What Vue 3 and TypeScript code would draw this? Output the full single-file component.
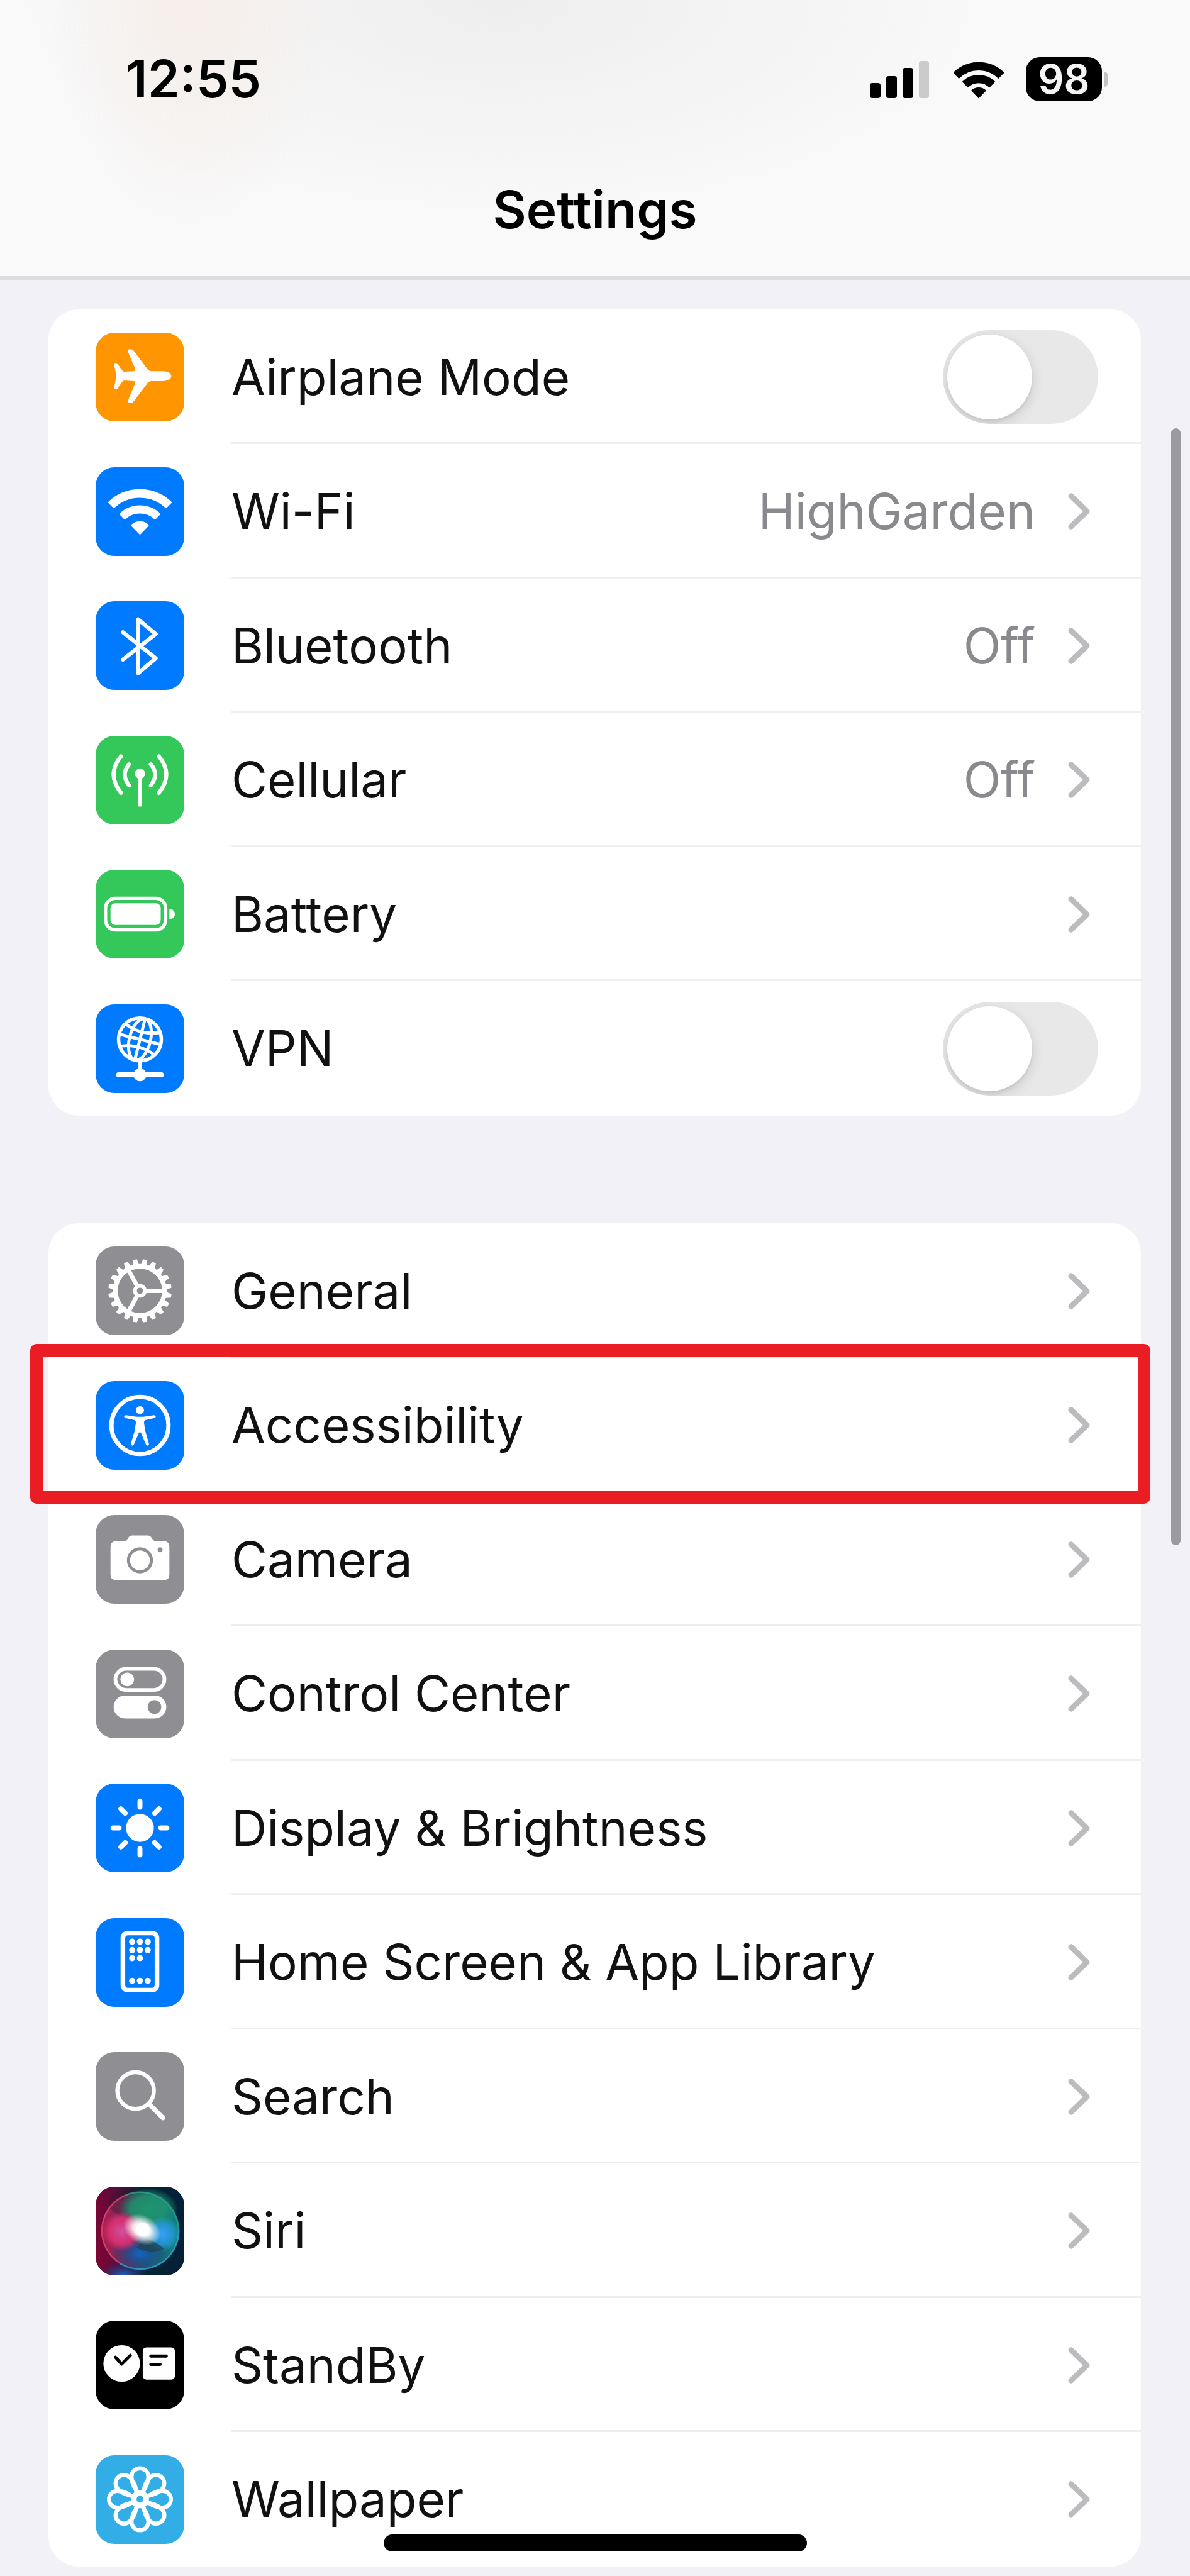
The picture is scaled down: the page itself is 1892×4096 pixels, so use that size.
<script setup lang="ts">
import { ref } from 'vue'

interface SettingRow {
  id: string
  label: string
  tint: string
  value?: string
  toggle?: boolean
  highlighted?: boolean
}

const blue = '#007aff'
const green = '#34c759'
const gray = '#8e8e93'

const groups: SettingRow[][] = [
  [
    { id: 'airplane', label: 'Airplane Mode', tint: '#ff9500', toggle: true },
    { id: 'wifi', label: 'Wi-Fi', tint: blue, value: 'HighGarden' },
    { id: 'bluetooth', label: 'Bluetooth', tint: blue, value: 'Off' },
    { id: 'cellular', label: 'Cellular', tint: green, value: 'Off' },
    { id: 'battery', label: 'Battery', tint: green },
    { id: 'vpn', label: 'VPN', tint: blue, toggle: true },
  ],
  [
    { id: 'general', label: 'General', tint: gray },
    { id: 'accessibility', label: 'Accessibility', tint: blue, highlighted: true },
    { id: 'camera', label: 'Camera', tint: gray },
    { id: 'control', label: 'Control Center', tint: gray },
    { id: 'display', label: 'Display & Brightness', tint: blue },
    { id: 'home', label: 'Home Screen & App Library', tint: blue },
    { id: 'search', label: 'Search', tint: gray },
    { id: 'siri', label: 'Siri', tint: '#10141c' },
    { id: 'standby', label: 'StandBy', tint: '#000000' },
    { id: 'wallpaper', label: 'Wallpaper', tint: '#32ade6' },
  ],
]

const enabled = ref<Record<string, boolean>>({ airplane: false, vpn: false })

const teeth = Array.from({ length: 20 }, (_, i) => i * 18 + 9)
const rays = Array.from({ length: 8 }, (_, i) => i * 45)
const appDots = [
  [59, 38], [71.5, 38], [84, 38],
  [59, 51.5], [71.5, 51.5], [84, 51.5],
  [59, 64.5], [71.5, 64.5],
  [59, 101], [71.5, 101], [84, 101],
]
</script>

<template>
  <div class="phone">
    <header class="header">
      <div class="status">
        <time class="clock">12:55</time>
        <div class="indicators">
          <svg class="signal" viewBox="0 0 94 60" aria-hidden="true">
            <rect x="0" y="36" width="17" height="24" rx="4" />
            <rect x="26" y="25" width="17" height="35" rx="4" />
            <rect x="52" y="12" width="17" height="48" rx="4" />
            <rect x="78" y="1" width="16" height="59" rx="4" fill="#cbcbcb" />
          </svg>
          <svg class="wifi" viewBox="20 33 103 77" aria-hidden="true">
            <g fill="none" stroke="#000" stroke-width="17">
              <path d="M25 63.500A66 66 0 0 1 118 63.500" />
              <path d="M43.500 82A39.500 39.500 0 0 1 99.500 82" />
            </g>
            <path d="M71.500 110L56 94A22 22 0 0 1 87 94Z" />
          </svg>
          <div class="power">
            <span class="level">98</span>
            <span class="nub"></span>
          </div>
        </div>
      </div>
      <h1 class="title">Settings</h1>
    </header>

    <main class="content">
      <ul v-for="(group, g) in groups" :key="g" class="group">
        <li
          v-for="row in group"
          :key="row.id"
          class="item"
          :class="{ highlighted: row.highlighted }"
        >
          <component
            :is="row.toggle ? 'label' : 'a'"
            class="row"
            :href="row.toggle ? undefined : '#' + row.id"
            :for="row.toggle ? 'switch-' + row.id : undefined"
          >
            <svg
              class="icon"
              viewBox="0 0 143 143"
              :style="{ backgroundColor: row.tint }"
              fill="none"
              stroke-linecap="round"
              stroke-linejoin="round"
              aria-hidden="true"
            >
              <path
                v-if="row.id === 'airplane'"
                fill="#fff"
                d="M122 70C122 75 116 78 108 78H89Q86 78 84 81L62 110Q60 113 57 113H54Q51 113 52 110L64 81Q65 78 62 78L47 77Q44 77 43 79L36 89Q35 91 33 91H31Q29.500 91 30 88L33.500 70L30 52Q29.500 49 31 49H33Q35 49 36 51L43 61Q44 63 47 63L62 62Q65 62 64 59L52 30Q51 27 54 27H57Q60 27 62 30L84 59Q86 62 89 62H108C116 62 122 65 122 70Z"
              />
              <g v-else-if="row.id === 'wifi'">
                <g stroke="#fff" stroke-linecap="butt">
                  <path stroke-width="14" d="M24.500 61.500A67 67 0 0 1 118.500 61.500" />
                  <path stroke-width="13" d="M42.500 80A41 41 0 0 1 100.500 80" />
                </g>
                <path fill="#fff" d="M71.500 109L57.500 94.500Q57 93 58 92A21 21 0 0 1 85 92Q86 93 85.500 94.500Z" />
              </g>
              <path
                v-else-if="row.id === 'bluetooth'"
                stroke="#fff"
                stroke-width="6.500"
                d="M44 50L97 92L68.500 116V29L97 53L44 94"
              />
              <g v-else-if="row.id === 'cellular'" stroke="#fff" stroke-width="6.500">
                <path d="M41 33Q17 62 41 92M102 33Q126 62 102 92" />
                <path d="M54 46Q40 62 54 80M89 46Q103 62 89 80M71.500 64V111" />
                <circle cx="71.500" cy="61" r="5" fill="#fff" />
              </g>
              <g v-else-if="row.id === 'battery'">
                <rect x="16" y="46" width="97" height="51" rx="16" stroke="#fff" stroke-width="5.500" />
                <rect x="24" y="54" width="81" height="35" rx="8" fill="#fff" />
                <path fill="#fff" d="M119 63Q128 65 128 71.500Q128 78 119 80Z" />
              </g>
              <g v-else-if="row.id === 'vpn'" stroke="#fff" stroke-width="5">
                <circle cx="71.500" cy="56.500" r="34.500" stroke-width="5.500" />
                <g transform="rotate(14 71.500 56.500)">
                  <ellipse cx="71.500" cy="56.500" rx="17" ry="34" />
                  <path d="M71.500 22V91M38 56.500H105M43 38Q71.500 50 100 38M43 75Q71.500 63 100 75" />
                </g>
                <path stroke-width="7" d="M71.500 92V112" />
                <path stroke-width="8" d="M37 113.500H106" />
                <circle cx="71.500" cy="113.500" r="8" fill="#fff" />
              </g>
              <g v-else-if="row.id === 'general'" stroke="#fff">
                <circle cx="71.500" cy="71.500" r="39.500" stroke-width="7.500" />
                <path
                  v-for="a in teeth"
                  :key="a"
                  fill="#fff"
                  stroke="none"
                  d="M66 31L68.500 20.500H74.500L77 31Z"
                  :transform="`rotate(${a} 71.500 71.500)`"
                />
                <circle cx="71.500" cy="71.500" r="8" stroke-width="6" />
                <path stroke-width="7" d="M81 71.500H110M67 63.500L53 38M67 79.500L53 105" />
              </g>
              <g v-else-if="row.id === 'accessibility'">
                <circle cx="71.500" cy="71.500" r="46" stroke="#fff" stroke-width="7" />
                <circle cx="71.500" cy="47" r="6.500" fill="#fff" />
                <path
                  fill="#fff"
                  d="M49 55L66 57.500H77L94 55Q97 55 97 57Q97 59 95 59.500L80 63Q78 64 78 67L80 80L86 101Q86 104 84 104Q82 104.500 81 102L73 83H70L62 102Q61 104.500 59 104Q57 104 57 101L63 80L65 67Q65 64 63 63L48 59.500Q46 59 46 57Q46 55 49 55Z"
                />
              </g>
              <g v-else-if="row.id === 'camera'">
                <path
                  fill="#fff"
                  d="M34 42H46Q49 42 51 39L54 35Q56 33 59 33H84Q87 33 89 35L92 39Q94 42 97 42H109Q119 42 119 51V96Q119 105 109 105H34Q24 105 24 96V51Q24 42 34 42Z"
                />
                <circle cx="71.500" cy="73" r="18.500" stroke="#8e8e93" stroke-width="5" />
                <circle cx="104" cy="56" r="4" fill="#8e8e93" />
              </g>
              <g v-else-if="row.id === 'control'">
                <rect x="32" y="31" width="79" height="34" rx="17" stroke="#fff" stroke-width="6" />
                <circle cx="51" cy="48" r="11" fill="#fff" />
                <rect x="29" y="74" width="85" height="37" rx="18.500" fill="#fff" />
                <circle cx="95" cy="92.500" r="11" fill="#8e8e93" />
              </g>
              <g v-else-if="row.id === 'display'">
                <circle cx="71.500" cy="71.500" r="22.500" fill="#fff" />
                <path
                  v-for="a in rays"
                  :key="a"
                  stroke="#fff"
                  stroke-width="8"
                  d="M105 71.500H115"
                  :transform="`rotate(${a} 71.500 71.500)`"
                />
              </g>
              <g v-else-if="row.id === 'home'">
                <rect x="44" y="24" width="55" height="92" rx="8" stroke="#fff" stroke-width="7.500" />
                <circle v-for="(d, i) in appDots" :key="i" :cx="d[0]" :cy="d[1]" r="5" fill="#fff" />
              </g>
              <g v-else-if="row.id === 'search'" stroke="#fff">
                <circle cx="64.500" cy="62" r="29.500" stroke-width="6.500" />
                <path stroke-width="7.500" d="M86 83.500L108.500 106" />
              </g>
              <g v-else-if="row.id === 'siri'">
                <defs>
                  <linearGradient id="siri-edge" x1="0" y1="0.550" x2="1" y2="0.450">
                    <stop offset="0" stop-color="#7d0535" />
                    <stop offset="0.250" stop-color="#5c0b3a" />
                    <stop offset="0.550" stop-color="#062430" />
                    <stop offset="1" stop-color="#04203a" />
                  </linearGradient>
                  <linearGradient id="siri-orb" x1="0" y1="0" x2="1" y2="0">
                    <stop offset="0" stop-color="#c21f55" />
                    <stop offset="0.350" stop-color="#6c3a66" />
                    <stop offset="0.600" stop-color="#2d6f7c" />
                    <stop offset="1" stop-color="#109a98" />
                  </linearGradient>
                  <radialGradient id="siri-green">
                    <stop offset="0" stop-color="#1f9470" />
                    <stop offset="0.600" stop-color="#1f9470" stop-opacity="0.850" />
                    <stop offset="1" stop-color="#1f9470" stop-opacity="0" />
                  </radialGradient>
                  <radialGradient id="siri-pink">
                    <stop offset="0" stop-color="#d250a0" />
                    <stop offset="0.650" stop-color="#dc2f70" stop-opacity="0.900" />
                    <stop offset="1" stop-color="#dc2f70" stop-opacity="0" />
                  </radialGradient>
                  <radialGradient id="siri-blue">
                    <stop offset="0" stop-color="#1465c4" />
                    <stop offset="1" stop-color="#12346e" stop-opacity="0" />
                  </radialGradient>
                  <radialGradient id="siri-sky">
                    <stop offset="0" stop-color="#3a9ff8" />
                    <stop offset="0.600" stop-color="#249ae0" stop-opacity="0.800" />
                    <stop offset="1" stop-color="#20b0c0" stop-opacity="0" />
                  </radialGradient>
                  <radialGradient id="siri-glow">
                    <stop offset="0" stop-color="#fff" />
                    <stop offset="0.450" stop-color="#fff" stop-opacity="0.900" />
                    <stop offset="1" stop-color="#fff" stop-opacity="0" />
                  </radialGradient>
                </defs>
                <rect width="143" height="143" fill="url(#siri-edge)" />
                <ellipse cx="45" cy="143" rx="42" ry="24" fill="url(#siri-blue)" />
                <circle cx="72" cy="71" r="62" fill="url(#siri-orb)" opacity="0.800" />
                <ellipse cx="55" cy="27" rx="34" ry="22" fill="#3a1830" opacity="0.350" />
                <ellipse cx="85" cy="36" rx="48" ry="34" fill="url(#siri-green)" />
                <ellipse cx="72" cy="108" rx="50" ry="32" fill="url(#siri-blue)" />
                <circle cx="43" cy="72" r="32" fill="url(#siri-pink)" />
                <circle cx="108" cy="76" r="28" fill="url(#siri-sky)" />
                <path fill="#1f3e50" opacity="0.700" d="M80 84Q98 88 110 100Q92 112 66 98Z" />
                <ellipse cx="75" cy="69" rx="32" ry="23" fill="url(#siri-glow)" transform="rotate(28 75 69)" />
                <circle cx="76" cy="69" r="11" fill="#fff" />
                <path stroke="#e04a70" stroke-width="2.500" opacity="0.800" d="M40 124A62 62 0 0 1 50 13" />
                <path stroke="#2ba58c" stroke-width="2.500" opacity="0.800" d="M50 13A62 62 0 0 1 134 71" />
                <path stroke="#28a0c8" stroke-width="2.500" opacity="0.900" d="M134 71A62 62 0 0 1 40 124" />
              </g>
              <g v-else-if="row.id === 'standby'">
                <circle cx="42" cy="69" r="29.500" fill="#fff" />
                <path stroke="#000" stroke-width="5" d="M32 59L42 70L56 56" />
                <rect x="76" y="43" width="52" height="52" rx="6" fill="#fff" />
                <path stroke="#000" stroke-width="5" d="M89 57H114M89 70.500H104" />
              </g>
              <g v-else-if="row.id === 'wallpaper'" stroke="#fff" stroke-width="6.500">
                <path
                  v-for="a in rays"
                  :key="a"
                  d="M82 68C90 62 97 57.500 108 57.500A13.500 13.500 0 0 1 108 84.500C97 84.500 90 80 82 74"
                  :transform="`rotate(${a} 71.500 71)`"
                />
                <circle cx="71.500" cy="71" r="10" stroke-width="9" />
              </g>
            </svg>

            <span class="body">
              <span class="label">{{ row.label }}</span>
              <input
                v-if="row.toggle"
                :id="'switch-' + row.id"
                v-model="enabled[row.id]"
                class="switch"
                type="checkbox"
                role="switch"
              />
              <template v-else>
                <span v-if="row.value" class="value">{{ row.value }}</span>
                <svg class="chevron" viewBox="0 0 36 60" aria-hidden="true">
                  <path
                    d="M5 5L31 30L5 55"
                    fill="none"
                    stroke="#bcbcbe"
                    stroke-width="9"
                    stroke-linecap="round"
                    stroke-linejoin="round"
                  />
                </svg>
              </template>
            </span>
          </component>
        </li>
      </ul>
    </main>

    <div class="scrollbar"></div>
    <div class="home-bar"></div>
  </div>
</template>

<style>
body {
  margin: 0;
  background: #f2f1f7;
}
</style>

<style scoped>
.phone {
  position: relative;
  min-height: 100vh;
  box-sizing: border-box;
  overflow: hidden;
  background: #f2f1f7;
  color: #111;
  font-family: Inter, Roboto, "Liberation Sans", sans-serif;
  font-size: 78px;
  line-height: 100px;
}

.header {
  padding: 76px 0 55px;
  border-bottom: 7px solid #dcdce1;
  background:
    radial-gradient(ellipse 12% 85% at 16% 0, #f5eee9 0, #f5eee900 100%),
    radial-gradient(ellipse 42% 80% at 42% 0, #eeeeee 0, #eeeeee00 100%),
    #f9f9fa;
  color: #000;
}

.status {
  display: flex;
  align-items: center;
  justify-content: space-between;
  padding: 0 131px 0 200px;
}

.clock {
  font-size: 82px;
  font-weight: 600;
}

.indicators {
  display: flex;
  align-items: center;
}

.signal {
  width: 94px;
  height: 60px;
}

.wifi {
  width: 80px;
  height: 61px;
  margin: 0 35px 0 39px;
}

.power {
  display: flex;
  align-items: center;
  gap: 4px;
}

.level {
  width: 121px;
  height: 70px;
  border-radius: 22px;
  background: #000;
  color: #f4f4f4;
  font-size: 64px;
  font-weight: 600;
  line-height: 70px;
  text-align: center;
}

.nub {
  width: 5px;
  height: 24px;
  border-radius: 0 5px 5px 0;
  background: #c4c4c4;
}

.title {
  margin: 108px 0 0;
  font-size: 82px;
  font-weight: 600;
  text-align: center;
}

.content {
  display: flex;
  flex-direction: column;
  gap: 171px;
  padding: 46px 78px 15px 77px;
}

.group {
  margin: 0;
  padding: 1px 0 0;
  border-radius: 48px;
  background: #fff;
  list-style: none;
}

.item {
  position: relative;
}

.row {
  display: flex;
  align-items: center;
  height: 213px;
  padding-left: 75px;
  color: inherit;
  text-decoration: none;
}

.item:nth-child(even) .row {
  height: 214px;
}

.icon {
  flex: none;
  width: 141px;
  height: 141px;
  border-radius: 30px;
}

.body {
  display: flex;
  flex: 1;
  align-items: center;
  align-self: stretch;
  margin-left: 75px;
  padding: 3px 68px 0 0;
  border-bottom: 3px solid #eeeeef;
}

.item:last-child .body {
  border-bottom-color: transparent;
}

.label {
  flex: 1;
}

.value {
  margin-right: 52px;
  color: #8a8a8e;
}

.chevron {
  flex: none;
  width: 35px;
  height: 60px;
  margin-right: 13px;
}

.switch {
  flex: none;
  width: 247px;
  height: 149px;
  box-sizing: border-box;
  margin: 0;
  padding: 7px;
  border-radius: 75px;
  background: #e8e8e8;
  appearance: none;
  overflow: hidden;
}

.switch::before {
  content: "";
  display: block;
  width: 135px;
  height: 135px;
  border-radius: 50%;
  background: #fff;
  box-shadow: 0 6px 20px #00000024, 0 4px 4px #0000000d;
}

.switch:checked {
  background: #34c759;
}

.switch:checked::before {
  margin-left: auto;
}

.highlighted::after {
  content: "";
  position: absolute;
  z-index: 1;
  inset: -22px -15px -18px -29px;
  border: 20px solid #ea1d25;
  border-radius: 10px;
  pointer-events: none;
}

.scrollbar {
  position: absolute;
  top: 681px;
  right: 15px;
  width: 15px;
  height: 1776px;
  border-radius: 8px;
  background: #9a9a9f;
}

.home-bar {
  position: absolute;
  right: 0;
  bottom: 39px;
  left: 0;
  width: 673px;
  height: 27px;
  margin: 0 auto;
  border-radius: 14px;
  background: #000;
}
</style>
